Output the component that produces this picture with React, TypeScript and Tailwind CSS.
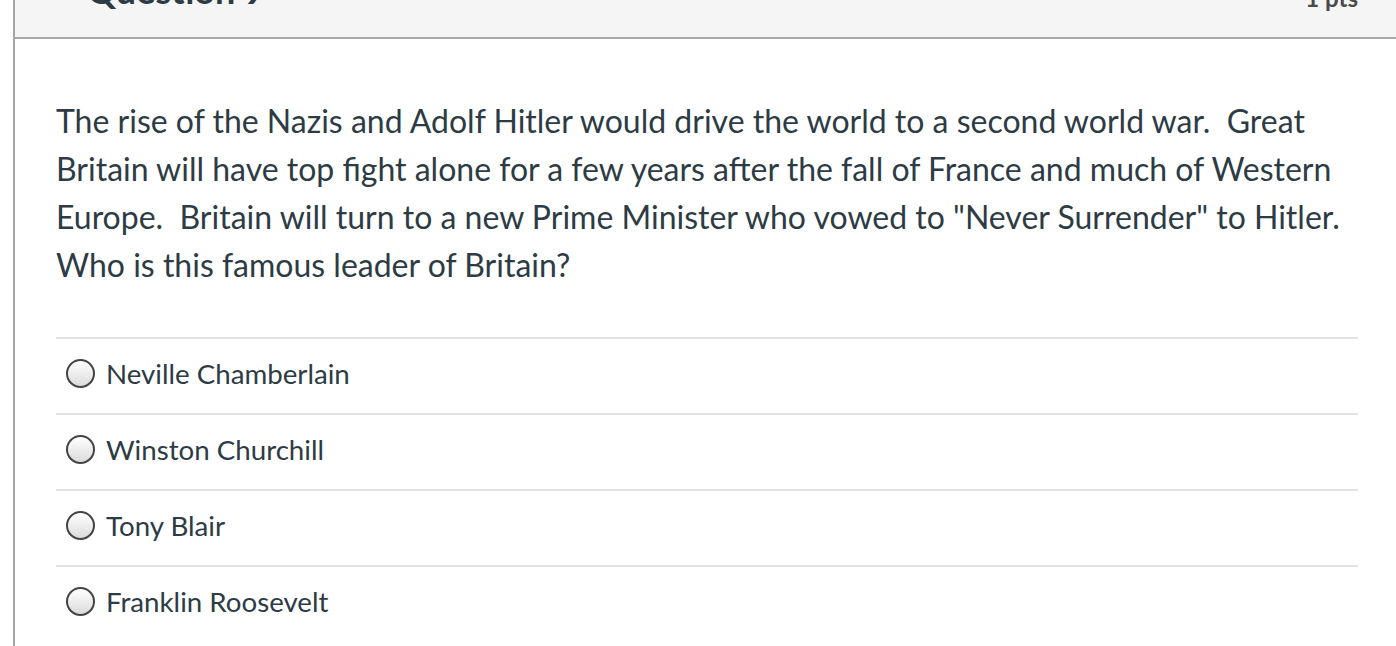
export default function App() {
  const answers = ['Neville Chamberlain', 'Winston Churchill', 'Tony Blair', 'Franklin Roosevelt'];

  return (
    <div className="h-[646px] w-[1396px] overflow-hidden bg-white pl-[13px] font-['Lato','Noto_Sans',sans-serif] text-[#2d3b45]">
      <div className="h-full w-[1390px] border-l-2 border-[#a5a5a5]">
        {/* header, scrolled mostly out of view */}
        <div className="h-[39px] overflow-hidden border-b-2 border-[#a8a8a8] bg-[#f5f5f5]">
          <div className="mt-[-30px] flex items-end pl-[15px] pr-[45px]">
            <div className="mb-[36px] h-[3px] w-[23px] bg-[#5f7587]" />
            <h2 className="ml-[34px] text-[36px] font-bold leading-[40px]">Question 9</h2>
            <span className="ml-auto mb-[-4px] text-[24px] font-bold leading-[32px] text-[#4a4a4a]">1 pts</span>
          </div>
        </div>

        <div className="pl-[41px] pr-[45px] pt-[58px]">
          <p className="text-[32px] leading-[48px]">
            The rise of the Nazis and Adolf Hitler would drive the world to a second world war.&nbsp; Great Britain will
            have top fight alone for a few years after the fall of France and much of Western Europe.&nbsp; Britain will
            turn to a new Prime Minister who vowed to "Never Surrender" to Hitler.&nbsp; Who is this famous leader of
            Britain?
          </p>

          <div className="mt-[48px]">
            {answers.map((a) => (
              <div key={a} className="flex h-[76px] items-center border-t-2 border-[#e2e2e2] pb-[5px]">
                <span className="ml-[10px] h-[29px] w-[29px] rounded-full border-2 border-[#444] bg-gradient-to-b from-white to-[#dcdcdc]" />
                <span className="ml-[11px] text-[27.7px] leading-[36px]">{a}</span>
              </div>
            ))}
          </div>
        </div>
      </div>
    </div>
  );
}
